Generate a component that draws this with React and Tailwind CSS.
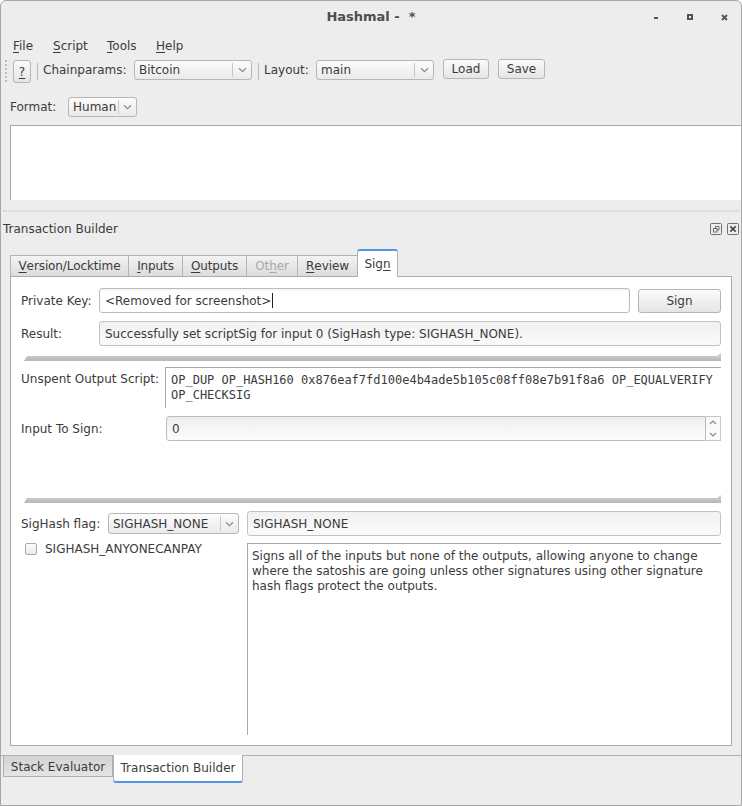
import React from "react";

// Mnemonic letter, underlined like a Qt accelerator
function U({ children }) {
  return <span className="underline decoration-1 underline-offset-[2px]">{children}</span>;
}

function Chevron() {
  return (
    <svg width="9" height="6" viewBox="0 0 9 6" className="block">
      <path d="M1 1.2 L4.5 4.6 L8 1.2" fill="none" stroke="#8e8e8e" strokeWidth="1.3" />
    </svg>
  );
}

function Combo({ text, className, arrow }) {
  return (
    <div
      className={`flex items-stretch rounded-[3px] border border-[#b7b7b7] bg-linear-to-b from-[#fcfcfc] to-[#eaeaea] ${className}`}
    >
      <span className="flex flex-1 items-center overflow-hidden whitespace-nowrap pl-[4px]">{text}</span>
      <span className="my-[2px] w-px bg-[#c9c9c9]" />
      <span className={`flex items-center justify-center ${arrow}`}>
        <Chevron />
      </span>
    </div>
  );
}

function Button({ children, className }) {
  return (
    <div
      className={`flex items-center justify-center rounded-[3px] border border-[#b5b5b5] bg-linear-to-b from-[#fbfbfb] to-[#e5e5e5] ${className}`}
    >
      {children}
    </div>
  );
}

// QSplitter handle drawn as a sunken bar with a raised right tip
function SplitBar() {
  return (
    <div className="ml-[3px] h-[8px] bg-linear-to-b from-[#d6d4d1] to-[#b9b6b3] [clip-path:polygon(3px_3px,calc(100%_-_4px)_3px,100%_0,100%_100%,0_100%)]" />
  );
}

function DockFloatIcon() {
  return (
    <svg width="12" height="12" viewBox="0 0 12 12" className="block">
      <rect x="0.5" y="0.5" width="11" height="11" rx="1" fill="none" stroke="#707070" />
      <rect x="3.5" y="5.5" width="3.5" height="3.5" fill="none" stroke="#707070" />
      <path d="M5.5 5.5 V3.5 H9 V7 H7" fill="none" stroke="#707070" />
    </svg>
  );
}

function DockCloseIcon() {
  return (
    <svg width="12" height="12" viewBox="0 0 12 12" className="block">
      <rect x="0.5" y="0.5" width="11" height="11" rx="1" fill="none" stroke="#707070" />
      <path d="M3.3 3.3 L8.7 8.7 M8.7 3.3 L3.3 8.7" stroke="#4a4a4a" strokeWidth="1.7" />
    </svg>
  );
}

export default function App() {
  const tabs = [
    { label: <><U>V</U>ersion/Locktime</>, w: "w-[118px]" },
    { label: <><U>I</U>nputs</>, w: "w-[54px]" },
    { label: <><U>O</U>utputs</>, w: "w-[64px]" },
    { label: <>Ot<U>h</U>er</>, w: "w-[51px]", disabled: true },
    { label: <><U>R</U>eview</>, w: "w-[60px]" },
  ];

  return (
    <div className="flex h-[806px] w-[742px] flex-col overflow-hidden rounded-t-[6px] border border-[#a6a6a6] bg-[#ededed] text-[12px] text-[#3b3b3b] [font-family:'DejaVu_Sans',sans-serif]">
      {/* title bar */}
      <div className="grid h-[32px] shrink-0 grid-cols-[1fr_auto_1fr] items-center">
        <div />
        <div className="whitespace-pre text-[13px] font-bold text-[#4e4e4e]">Hashmal -  *</div>
        <div className="flex justify-end">
          <div className="flex w-[34px] justify-center pt-[3px]">
            <div className="h-[2px] w-[4px] bg-[#555]" />
          </div>
          <div className="flex w-[34px] justify-center">
            <div className="h-[6px] w-[6px] border-2 border-[#555]" />
          </div>
          <div className="flex w-[34px] justify-center">
            <svg width="7" height="7" viewBox="0 0 7 7" className="block">
              <path d="M1 1 L6 6 M6 1 L1 6" stroke="#555" strokeWidth="1.8" />
            </svg>
          </div>
        </div>
      </div>

      {/* menu bar */}
      <div className="flex h-[24px] shrink-0 items-center pl-[12px] pt-[2px]">
        <span className="w-[40px]"><U>F</U>ile</span>
        <span className="w-[54px]"><U>S</U>cript</span>
        <span className="w-[49px]"><U>T</U>ools</span>
        <span><U>H</U>elp</span>
      </div>

      {/* tool bar */}
      <div className="flex h-[26px] shrink-0 items-start pl-[4px]">
        <div className="mt-[3px] h-[22px] w-[3px] border-l-2 border-dotted border-[#bdbdbd]" />
        <Button className="ml-[5px] mt-[3px] h-[23px] w-[18px]">
          <U>?</U>
        </Button>
        <div className="ml-[6px] mt-[6px] h-[17px] w-px bg-[#bcbcbc]" />
        <span className="ml-[5px] mt-[3px] w-[91px] leading-[20px]">Chainparams:</span>
        <Combo text="Bitcoin" className="mt-[3px] h-[20px] w-[118px]" arrow="w-[18px]" />
        <div className="ml-[6px] mt-[6px] h-[17px] w-px bg-[#bcbcbc]" />
        <span className="ml-[5px] mt-[3px] w-[52px] leading-[20px]">Layout:</span>
        <Combo text="main" className="mt-[3px] h-[20px] w-[118px]" arrow="w-[18px]" />
        <Button className="ml-[9px] mt-[2px] h-[20px] w-[46px]">Load</Button>
        <Button className="ml-[9px] mt-[2px] h-[20px] w-[47px]">Save</Button>
      </div>

      {/* format selector */}
      <div className="mt-[14px] flex h-[20px] shrink-0 items-center pl-[9px]">
        <span className="w-[58px]">Format:</span>
        <Combo text="Human" className="h-[20px] w-[69px]" arrow="w-[17px]" />
      </div>

      {/* transaction text */}
      <div className="ml-[9px] mt-[8px] h-[75px] shrink-0 border-l border-t border-[#a9a9a9] bg-white" />

      {/* dock splitter */}
      <div className="mx-[2px] mt-[10px] h-[2px] shrink-0 border-y border-dotted border-[#d2d2d2]" />

      {/* dock title */}
      <div className="flex h-[32px] shrink-0 items-center pl-[2px] pr-[2px] pt-[2px]">
        <span className="flex-1">Transaction Builder</span>
        <DockFloatIcon />
        <span className="ml-[5px]">
          <DockCloseIcon />
        </span>
      </div>

      {/* tab bar */}
      <div className="mt-[5px] flex h-[27px] shrink-0 items-end pl-[9px]">
        {tabs.map((t, i) => (
          <div
            key={i}
            className={`flex h-[21px] items-center justify-center border-l border-t border-[#b3b3b3] bg-linear-to-b from-[#f3f3f3] to-[#dcdcdc] tracking-[-0.1px] ${t.w} ${
              t.disabled ? "text-[#a9a9a9]" : ""
            }`}
          >
            {t.label}
          </div>
        ))}
        <div className="relative z-10 mb-[-1px] flex h-[28px] w-[41px] items-center justify-center rounded-t-[3px] border-x border-t-2 border-[#b3b3b3] border-t-[#5294e2] bg-white pb-[1px]">
          Sig<U>n</U>
        </div>
      </div>

      {/* tab panel */}
      <div className="mx-[9px] flex h-[470px] shrink-0 flex-col border border-[#ababab] bg-white px-[10px] pt-[11px]">
        {/* private key */}
        <div className="flex h-[25px] items-center">
          <span className="w-[78px]">Private Key:</span>
          <div className="flex h-[25px] flex-1 items-center rounded-[3px] border border-[#bdbdbd] bg-white pl-[5px] shadow-[inset_0_1px_2px_rgba(0,0,0,0.07)]">
            &lt;Removed for screenshot&gt;
            <span className="ml-px h-[15px] w-px bg-[#222]" />
          </div>
          <Button className="ml-[8px] h-[24px] w-[83px]">Sign</Button>
        </div>

        {/* result */}
        <div className="mt-[8px] flex h-[25px] items-center">
          <span className="w-[78px]">Result:</span>
          <div className="flex h-[25px] flex-1 items-center rounded-[3px] border border-[#c2c2c2] bg-linear-to-b from-[#f1f1f1] to-[#fafafa] pl-[5px]">
            Successfully set scriptSig for input 0 (SigHash type: SIGHASH_NONE).
          </div>
        </div>

        <div className="mt-[7px]">
          <SplitBar />
        </div>

        {/* unspent output script */}
        <div className="mt-[6px] flex h-[41px]">
          <span className="w-[144px] pt-[5px] leading-[15px]">Unspent Output Script:</span>
          <div className="flex-1 border-l border-t border-[#a9a9a9] bg-white pl-[5px] pt-[5px] text-[12px] leading-[15px] [font-family:'DejaVu_Sans_Mono',monospace]">
            <div className="whitespace-pre">
              OP_DUP OP_HASH160 0x876eaf7fd100e4b4ade5b105c08ff08e7b91f8a6 OP_EQUALVERIFY
            </div>
            <div className="whitespace-pre">OP_CHECKSIG</div>
          </div>
        </div>

        {/* input index */}
        <div className="mt-[8px] flex h-[25px] items-center">
          <span className="w-[145px]">Input To Sign:</span>
          <div className="flex h-[25px] flex-1 items-center rounded-l-[3px] border border-[#bdbdbd] bg-linear-to-b from-[#ebebeb] via-[#f6f6f6] to-[#fcfcfc] pl-[5px]">
            0
          </div>
          <div className="flex h-[25px] w-[15px] flex-col border border-l-0 border-[#c6c6c6] bg-[#fafafa]">
            <div className="flex flex-1 items-center justify-center">
              <svg width="8" height="5" viewBox="0 0 8 5" className="block">
                <path d="M1 4 L4 1 L7 4" fill="none" stroke="#8a8a8a" strokeWidth="1.2" />
              </svg>
            </div>
            <div className="flex flex-1 items-center justify-center">
              <svg width="8" height="5" viewBox="0 0 8 5" className="block">
                <path d="M1 1 L4 4 L7 1" fill="none" stroke="#8a8a8a" strokeWidth="1.2" />
              </svg>
            </div>
          </div>
        </div>

        <div className="mt-[54px]">
          <SplitBar />
        </div>

        {/* sighash flag */}
        <div className="mt-[8px] flex h-[25px] items-center">
          <span className="w-[87px]">SigHash flag:</span>
          <Combo text="SIGHASH_NONE" className="h-[21px] w-[131px]" arrow="w-[17px]" />
          <div className="ml-[8px] flex h-[25px] flex-1 items-center rounded-[3px] border border-[#c2c2c2] bg-linear-to-b from-[#f1f1f1] to-[#fbfbfb] pl-[5px]">
            SIGHASH_NONE
          </div>
        </div>

        <div className="mt-[7px] flex h-[192px]">
          <div className="flex w-[226px] items-start pl-[4px]">
            <span className="h-[12px] w-[12px] rounded-[2px] border border-[#a9a9a9] bg-linear-to-b from-[#fdfdfd] to-[#ebebeb]" />
            <span className="ml-[8px] leading-[12px]">SIGHASH_ANYONECANPAY</span>
          </div>
          <div className="flex-1 border-l border-t border-[#a9a9a9] bg-white pl-[4px] pt-[5px] leading-[15px]">
            <div>Signs all of the inputs but none of the outputs, allowing anyone to change</div>
            <div>where the satoshis are going unless other signatures using other signature</div>
            <div>hash flags protect the outputs.</div>
          </div>
        </div>
      </div>

      {/* dock tabs */}
      <div className="mt-[9px] flex flex-1 items-start border-t border-[#b0b0b0] pl-[2px]">
        <div className="flex h-[21px] w-[110px] items-center justify-center border-x border-b border-[#b0b0b0] bg-linear-to-b from-[#d3d3d3] to-[#e4e4e4] pt-[2px]">
          Stack Evaluator
        </div>
        <div className="mt-[-1px] flex h-[28px] w-[130px] items-center justify-center rounded-b-[3px] border-x border-b-2 border-[#b0b0b0] border-b-[#5294e2] bg-white">
          Transaction Builder
        </div>
      </div>
    </div>
  );
}
